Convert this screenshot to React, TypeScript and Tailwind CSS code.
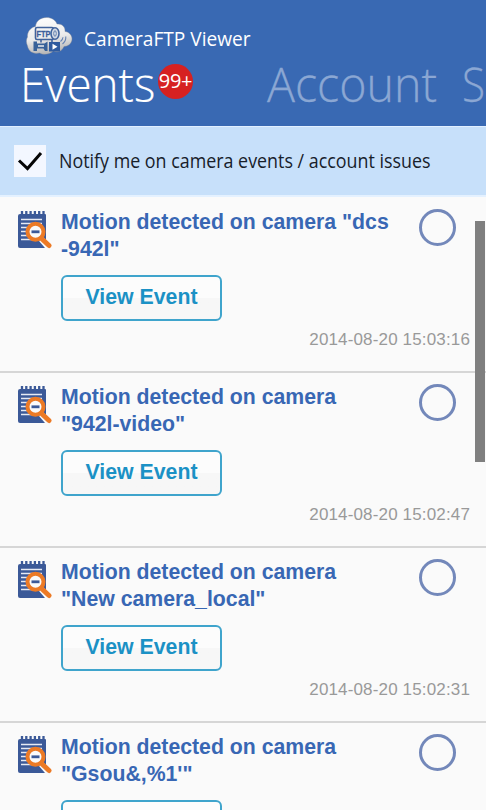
type CameraEvent = {
  title: string[];
  time: string;
};

const events: CameraEvent[] = [
  { title: ['Motion detected on camera "dcs', '-942l"'], time: "2014-08-20 15:03:16" },
  { title: ["Motion detected on camera", '"942l-video"'], time: "2014-08-20 15:02:47" },
  { title: ["Motion detected on camera", '"New camera_local"'], time: "2014-08-20 15:02:31" },
  { title: ["Motion detected on camera", "\"Gsou&,%1'\""], time: "2014-08-20 15:02:16" },
];

function CloudLogo() {
  return (
    <svg viewBox="0 0 48 40" className="h-10 w-12 shrink-0" aria-hidden="true">
      <defs>
        <linearGradient id="cloud" x1="0" y1="0" x2="0.2" y2="1">
          <stop offset="0" stopColor="#ffffff" />
          <stop offset="0.6" stopColor="#ececec" />
          <stop offset="1" stopColor="#b9b9b9" />
        </linearGradient>
      </defs>
      <path
        d="M10.500 10.500C11 5 15.500 1.500 21.500 1.500c5 0 9 2.500 10.500 6.500 5-.5 8.500 3 8 7.500 4 .5 7 3.500 7 7.500 0 4.500-4 7.500-8 7.500-2 5-6.500 6.500-10.500 4.500-4.500 4-10.500 4-14 2-6 1.500-11-1.500-12-7-1.500-3.500-1.500-6.500 0-9-.5-5 3-9.500 8-10.500z"
        fill="url(#cloud)"
        stroke="#7f8794"
        strokeWidth="0.4"
      />
      <rect x="10.500" y="11.500" width="18" height="12" rx="1.500" fill="none" stroke="#41639c" strokeWidth="1.600" />
      <text
        x="11.500"
        y="21"
        fontSize="9.500"
        fontWeight="700"
        textLength="14"
        lengthAdjust="spacingAndGlyphs"
        fill="#3a5e9a"
        stroke="#3a5e9a"
        strokeWidth="0.3"
        className="font-['Liberation_Sans',sans-serif]"
      >
        FTP
      </text>
      <ellipse cx="30" cy="17.500" rx="4" ry="5.800" fill="#d5dbe5" stroke="#41639c" strokeWidth="1.600" />
      <ellipse cx="30" cy="17.500" rx="1.200" ry="2.800" fill="#f3f3f3" stroke="#5373a6" strokeWidth="1" />
      {/* bracket and lens below the camera body */}
      <path d="M8.500 25.500h3.500v2h7.500l3-2v9.500h-2.500l-1.500-2.500H12V35H8.500z" fill="#376199" />
      <path d="M13 30h6" stroke="#dfe3e9" strokeWidth="1.600" />
      <path d="M16 23.500v3M27 23.500v3" stroke="#41639c" strokeWidth="1.600" />
      <rect x="24" y="26" width="11" height="9.500" fill="#2f5b9f" />
      <path d="M27.500 27.800l5 3-5 3z" fill="#fff" />
      <path d="M35.500 25.500c1.500-1 2.300-2.300 2.500-4.200M37.500 28c2.300-1.800 3.500-4.300 3.300-7.500" fill="none" stroke="#6482b3" strokeWidth="1.100" />
    </svg>
  );
}

function EventLogIcon() {
  return (
    <svg viewBox="0 0 36 38" className="mt-[3px] h-[38px] w-9 shrink-0" aria-hidden="true">
      <path d="M3 3H28Q29 3 29 4V37H3Q1 37 1 35V5Q1 3 3 3z" fill="#3b5998" />
      <path d="M5 0v4M9.300 0v4M13.600 0v4M17.900 0v4M22.200 0v4M26.500 0v4" stroke="#3b5998" strokeWidth="2.300" />
      <path d="M4 8.500h21M4 12.500h21M4 16.500h21M4 20.500h21M4 24.500h21M4 28.500h21" stroke="#e6eaf4" strokeWidth="1.700" />
      <path d="M25 25l10 10v2h-7l-6-7z" fill="#fafafa" />
      <circle cx="18.500" cy="20.800" r="8" fill="#fafafa" />
      <path d="M14.500 20.800h8" stroke="#3b5998" strokeWidth="2.800" />
      <circle cx="18.500" cy="20.800" r="8" fill="none" stroke="#ec7a25" strokeWidth="4" />
      <path d="M24.500 27.500l7.500 7" stroke="#ec7a25" strokeWidth="5" strokeLinecap="round" />
    </svg>
  );
}

function Header() {
  return (
    <header className="h-[126px] overflow-hidden bg-[#3969b3] pt-4 font-['Open_Sans','Noto_Sans',sans-serif] text-white">
      <div className="flex h-10 items-center pl-[25px]">
        <CloudLogo />
        <h1 className="mt-[5px] ml-[11px] origin-left scale-x-[0.955] whitespace-nowrap text-[20px] leading-7">
          CameraFTP Viewer
        </h1>
      </div>
      <nav className="-mt-0.5 flex h-[60px] whitespace-nowrap text-[48px] font-light leading-[60px]">
        <span className="ml-5 w-[116px] shrink-0">
          <span className="inline-block origin-left scale-x-[0.955] [-webkit-text-stroke:0.15px_white]">Events</span>
        </span>
        <span className="mt-2.5 ml-[22px] flex size-[35px] shrink-0 items-center justify-center rounded-full bg-[#d62121] pb-0.5 text-[20px] font-normal leading-none tracking-[-0.3px]">
          99+
        </span>
        <span className="ml-[74px] w-[195px] shrink-0 text-[#8ba7d3]">
          <span className="inline-block origin-left scale-x-[0.97] [-webkit-text-stroke:0.3px_#8ba7d3]">Account</span>
        </span>
        <span className="inline-block shrink-0 origin-left scale-x-[0.88] text-[#8ba7d3] [-webkit-text-stroke:0.3px_#8ba7d3]">
          S
        </span>
      </nav>
    </header>
  );
}

function NotifyBar() {
  return (
    <label className="flex h-[71px] items-center border-t border-b-2 border-t-[#e1efff] border-b-[#e4f1ff] bg-[#c7e0fa] pl-[14px] font-['Open_Sans','Noto_Sans',sans-serif]">
      <span className="flex size-8 shrink-0 items-center justify-center bg-[#f3f7ff]">
        <svg viewBox="0 0 32 32" className="size-8" aria-hidden="true">
          <path d="M5 15.500l8.500 8L27 8" fill="none" stroke="#050505" strokeWidth="3" />
        </svg>
      </span>
      <span className="ml-[13px] origin-left scale-x-[0.893] whitespace-nowrap text-[20px] text-[#17202a]">
        Notify me on camera events / account issues
      </span>
    </label>
  );
}

function EventRow({ event }: { event: CameraEvent }) {
  return (
    <li className="flex h-[175px] shrink-0 border-b-2 border-[#d6d6d6] pt-[10px] pl-[17px]">
      <EventLogIcon />
      <div className="ml-2 flex flex-1 flex-col items-start">
        <h2 className="mt-px h-[54px] whitespace-nowrap text-[21.25px] font-bold leading-[27px] text-[#3867b4]">
          {event.title.map((line) => (
            <span key={line} className="block">
              {line}
            </span>
          ))}
        </h2>
        <button className="mt-3 h-[46px] w-[161px] rounded-md border-2 border-[#3fa4cc] bg-linear-to-b from-[#fcfcfc] from-50% to-[#f7f7f7] to-50% text-[21.3px] font-bold text-[#1b91c5]">
          View Event
        </button>
        <time className="mt-[9px] mr-4 self-end whitespace-nowrap text-[17px] leading-5 tracking-[0.15px] text-[#999]">
          {event.time}
        </time>
      </div>
      <span className="mt-px mr-[30px] -ml-[67px] size-[37px] shrink-0 rounded-full border-[3px] border-[#7388ba]" />
    </li>
  );
}

export default function App() {
  return (
    <div className="relative flex h-[810px] w-[486px] flex-col overflow-hidden bg-[#fafafa] font-['Liberation_Sans',Arial,sans-serif]">
      <Header />
      <NotifyBar />
      <ul className="flex min-h-0 flex-1 flex-col overflow-hidden pt-px">
        {events.map((event) => (
          <EventRow key={event.time} event={event} />
        ))}
      </ul>
      <div className="absolute top-[221px] right-[1px] h-[241px] w-[10px] bg-[#7f7f7f]" />
    </div>
  );
}
